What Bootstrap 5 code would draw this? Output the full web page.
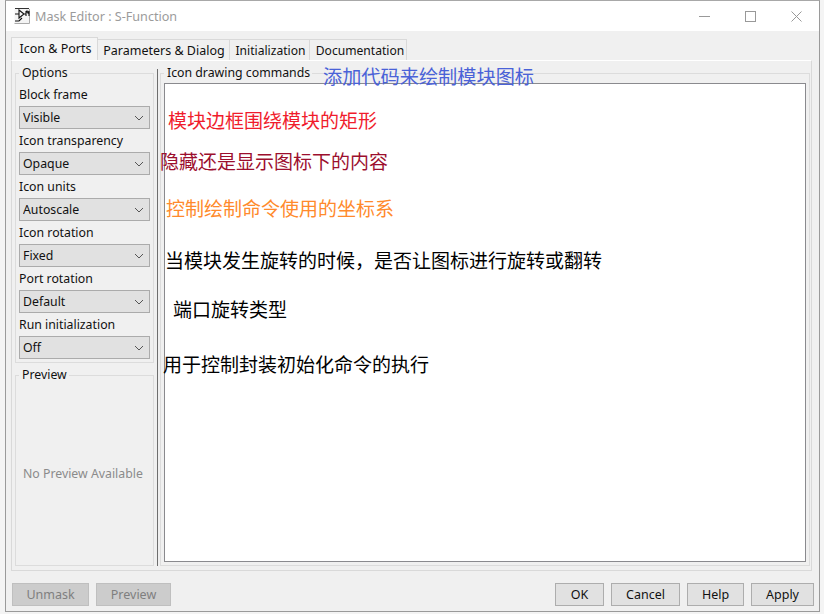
<!DOCTYPE html>
<html lang="zh">
<head>
<meta charset="utf-8">
<title>Mask Editor</title>
<link href="https://cdn.jsdelivr.net/npm/bootstrap@5.3.0/dist/css/bootstrap.min.css" rel="stylesheet">
<script src="https://cdn.jsdelivr.net/npm/bootstrap@5.3.0/dist/js/bootstrap.bundle.min.js"></script>
<style>
html,body{height:614px;overflow:hidden;background:#f4f4f4}
body{font-family:"Noto Sans","Noto Sans CJK SC",sans-serif;font-size:12.3px;line-height:16px;color:#111}
.win{width:815px;height:612px;margin-left:5px;background:#f0f0f0;border:1px solid #9a9a9a;border-top-color:#a8a8a8;display:flex;flex-direction:column}
.tbar{height:30px;background:#fff;flex:none;padding:0 0 0 8px}
.tbar .ttl{color:#9b9b9b;font-size:12.6px;margin-left:5px;padding-top:2px}
.wbtn{width:46px;height:30px;display:flex;align-items:center;justify-content:center}
.tabrow{height:29px;flex:none;padding:6px 0 0 5px;gap:0;border:0;align-items:flex-end}
.tabrow .tabx{height:21px;padding:2px 0 0;border:1px solid #d9d9d9;border-bottom:0;margin-left:-1px;background:#f0f0f0;display:flex;align-items:center;justify-content:center;color:#111;white-space:nowrap;font-size:12.5px}
.tabrow .tabx.on{height:23px;width:87px;margin-left:0;background:#f5f5f5;padding:0 0 1px 2px}
.tabrow .t2{width:133px;padding-left:1px}
.tabrow .t3{width:81px;font-size:12.1px;padding-left:2px}
.tabrow .t4{width:98px;font-size:12.1px;padding-left:4px}
.tabpanel{height:511px;flex:none;margin:0 7px 0 5px;border:1px solid #d9d9d9;border-top:1px solid #fff;display:flex;padding:4px 2px 4px 3px}
.leftcol{width:139px;flex:none;display:flex;flex-direction:column;gap:4px}
.split{background:#6e6e6e;flex:none;margin:4px 1px 0 3px;width:1px}
fieldset.grp{border:1px solid #dcdcdc;padding:0 3px;margin:0;min-width:0}
fieldset.grp legend{float:none;width:auto;font-size:12.3px;line-height:16px;margin:0;padding:0 2px 0 3px;color:#111}
fieldset.opts{height:298px;flex:none;padding-top:6px}
.opts .lbl{display:block;margin:0;height:16px;line-height:16px;white-space:nowrap}
.opts .fld{margin:3px 0 4px}
select.form-select.sel{height:23px;width:131px;padding:0 0 0 3px;border:1px solid #ababab;border-radius:0;background-color:#e1e1e1;font-size:12.3px;line-height:16px;color:#111;background-image:url("data:image/svg+xml,%3csvg xmlns='http://www.w3.org/2000/svg' viewBox='0 0 10 6'%3e%3cpath d='M1 1l4 4 4-4' fill='none' stroke='%23555' stroke-width='1'/%3e%3c/svg%3e");background-position:right 5px center;background-size:10px 6px;box-shadow:none}
.prev{flex:1;display:flex;align-items:flex-end}
.prev .none{color:#8b8b8b;margin:0 0 83px 4px;white-space:nowrap}
.rightcol{flex:1;position:relative;margin-left:1px}
fieldset.cmd{height:100%;padding:0 3px 3px 3px;display:flex;flex-direction:column}
.canvas{flex:1;background:#fff;border:1px solid #8a8a8e;margin-top:2px;width:642px}
.note{position:absolute;font-family:"Noto Sans CJK SC","Noto Sans",sans-serif;font-size:19px;line-height:24px;white-space:nowrap;color:#000}
.foot{flex:1;padding:12px 5px 0 6px}
.bbtn{height:23px;padding:0;border:1px solid #adadad;border-radius:0;background:#e1e1e1;font-size:12.5px;line-height:16px;color:#111}
.bbtn:disabled{background:#ccc;border-color:#bfbfbf;color:#7f7f7f;opacity:1}
.w-unmask{width:77px}.w-prev{width:75px;margin-left:7px}.w-ok{width:49px}.w-can{width:69px;margin-left:7px}.w-help{width:57px;margin-left:7px}.w-app{width:63px;margin-left:7px}
.n1{left:323px;top:64px;color:#4a62d8;font-size:19.2px}.n2{left:168px;top:108px;color:#f01c2c}.n3{left:160px;top:149px;color:#9c0f2e}.n4{left:166px;top:196px;color:#ff8a2c}.n5{left:165px;top:248px}.n6{left:173px;top:297px}.n7{left:163px;top:352px}
</style>
</head>
<body>
<div class="win">
  <div class="tbar d-flex align-items-center">
    <svg width="16" height="16" viewBox="0 0 16 16"><rect x=".5" y=".5" width="15" height="15" fill="#f4f4f4"/><path d="M.5 15.500h15V1" fill="none" stroke="#aaa"/><path d="M1 .5h14" stroke="#333"/><path d="M1 6h4M5 2l5 4-5 4zM10 6h2M12 3v5M1 13h4l3-3M12 5l1-2 1 2 1-2v5" fill="none" stroke="#111" stroke-width="1.1"/></svg>
    <span class="ttl">Mask Editor : S-Function</span>
    <div class="ms-auto d-flex">
      <span class="wbtn"><svg width="11" height="11"><path d="M0 5.500h11" stroke="#999"/></svg></span>
      <span class="wbtn"><svg width="11" height="11"><rect x=".5" y=".5" width="10" height="10" fill="none" stroke="#999"/></svg></span>
      <span class="wbtn"><svg width="11" height="11"><path d="M.5.5l10 10M10.500.5l-10 10" stroke="#999"/></svg></span>
    </div>
  </div>
  <div class="nav tabrow d-flex">
    <span class="tabx on">Icon &amp; Ports</span>
    <span class="tabx t2">Parameters &amp; Dialog</span>
    <span class="tabx t3">Initialization</span>
    <span class="tabx t4">Documentation</span>
  </div>
  <div class="tabpanel">
    <div class="leftcol">
      <fieldset class="grp opts">
        <legend>Options</legend>
        <label class="lbl">Block frame</label>
        <div class="fld"><select class="form-select sel"><option>Visible</option></select></div>
        <label class="lbl">Icon transparency</label>
        <div class="fld"><select class="form-select sel"><option>Opaque</option></select></div>
        <label class="lbl">Icon units</label>
        <div class="fld"><select class="form-select sel"><option>Autoscale</option></select></div>
        <label class="lbl">Icon rotation</label>
        <div class="fld"><select class="form-select sel"><option>Fixed</option></select></div>
        <label class="lbl">Port rotation</label>
        <div class="fld"><select class="form-select sel"><option>Default</option></select></div>
        <label class="lbl">Run initialization</label>
        <div class="fld"><select class="form-select sel"><option>Off</option></select></div>
      </fieldset>
      <fieldset class="grp prev">
        <legend>Preview</legend>
        <div class="none">No Preview Available</div>
      </fieldset>
    </div>
    <div class="split"></div>
    <div class="rightcol">
      <fieldset class="grp cmd">
        <legend>Icon drawing commands</legend>
        <div class="canvas"></div>
      </fieldset>
    </div>
  </div>
  <div class="foot d-flex">
    <button class="btn bbtn w-unmask" disabled>Unmask</button>
    <button class="btn bbtn w-prev" disabled>Preview</button>
    <button class="btn bbtn w-ok ms-auto">OK</button>
    <button class="btn bbtn w-can">Cancel</button>
    <button class="btn bbtn w-help">Help</button>
    <button class="btn bbtn w-app">Apply</button>
  </div>
</div>
<div class="note n1">添加代码来绘制模块图标</div>
<div class="note n2">模块边框围绕模块的矩形</div>
<div class="note n3">隐藏还是显示图标下的内容</div>
<div class="note n4">控制绘制命令使用的坐标系</div>
<div class="note n5">当模块发生旋转的时候，是否让图标进行旋转或翻转</div>
<div class="note n6">端口旋转类型</div>
<div class="note n7">用于控制封装初始化命令的执行</div>
</body>
</html>
